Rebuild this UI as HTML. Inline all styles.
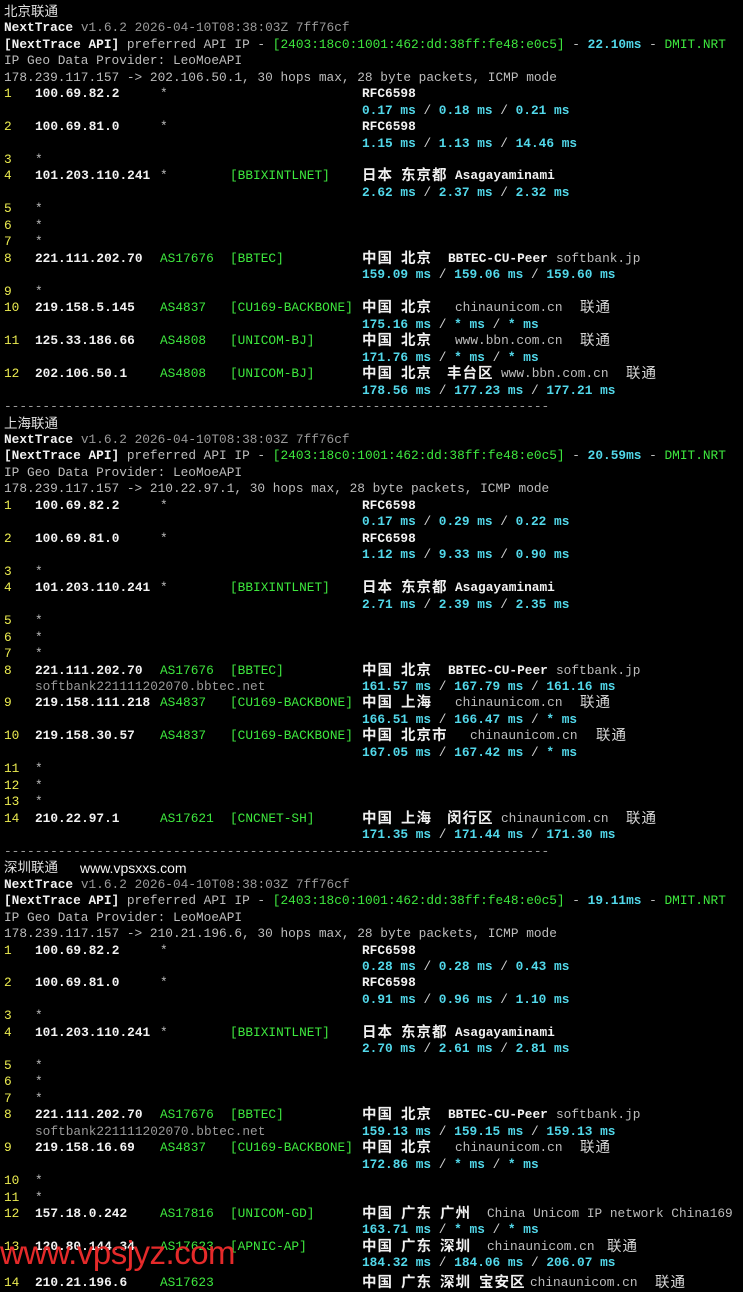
<!DOCTYPE html>
<html><head><meta charset="utf-8"><style>
html,body{margin:0;padding:0;background:#000;}
body{width:743px;height:1280px;overflow:hidden;position:relative;font-family:"Liberation Mono","Noto Sans CJK SC",monospace;font-size:12.8px;color:#bdbdbd;}
#t{position:absolute;top:3.8px;left:0;width:743px;}
.l{position:relative;height:16.48px;line-height:16.48px;white-space:pre;}
.l i{position:absolute;top:0;font-style:normal;white-space:pre;}
.w{color:#f2f2f2;font-weight:bold;}
.g{color:#9a9a9a;}
.gr{color:#3ee83e;}
.c{color:#52d8ea;font-weight:bold;}
.c b{color:#cfcfcf;font-weight:normal;}
.y{color:#ecec50;}
.l i.cj{font-family:"Noto Sans CJK SC",sans-serif;color:#f0f0f0;font-weight:bold;font-size:14.5px;letter-spacing:1px;top:-1px;}
.l i.cn{font-family:"Noto Sans CJK SC",sans-serif;color:#d8d8d8;font-size:14.5px;letter-spacing:1px;top:-1px;}
.l i.h{font-family:"Liberation Sans","Noto Sans CJK SC",sans-serif;color:#e0e0e0;font-size:13.5px;}
.wm{position:absolute;left:0;top:1234px;font-family:"Liberation Sans",sans-serif;font-size:33px;color:#e52a2a;letter-spacing:-0.5px;}
</style></head><body><div id="t">
<div class="l"><i class="h" style="left:4px">北京联通</i></div>
<div class="l"><i style="left:4px"><span class="w">NextTrace</span> <span class="g">v1.6.2 2026-04-10T08:38:03Z 7ff76cf</span></i></div>
<div class="l"><i style="left:4px"><span class="w">[NextTrace API]</span> preferred API IP - <span class="gr">[2403:18c0:1001:462:dd:38ff:fe48:e0c5]</span> - <span class="c">22.10ms</span> - <span class="gr">DMIT.NRT</span></i></div>
<div class="l"><i style="left:4px">IP Geo Data Provider: LeoMoeAPI</i></div>
<div class="l"><i style="left:4px">178.239.117.157 -&gt; 202.106.50.1, 30 hops max, 28 byte packets, ICMP mode</i></div>
<div class="l"><i class="y" style="left:4px">1</i><i class="w" style="left:35px">100.69.82.2</i><i style="left:160px">*</i><i class="w" style="left:362px">RFC6598</i></div>
<div class="l"><i class="c" style="left:362px">0.17 ms <b>/</b> 0.18 ms <b>/</b> 0.21 ms</i></div>
<div class="l"><i class="y" style="left:4px">2</i><i class="w" style="left:35px">100.69.81.0</i><i style="left:160px">*</i><i class="w" style="left:362px">RFC6598</i></div>
<div class="l"><i class="c" style="left:362px">1.15 ms <b>/</b> 1.13 ms <b>/</b> 14.46 ms</i></div>
<div class="l"><i class="y" style="left:4px">3</i><i style="left:35px">*</i></div>
<div class="l"><i class="y" style="left:4px">4</i><i class="w" style="left:35px">101.203.110.241</i><i style="left:160px">*</i><i class="gr" style="left:230px">[BBIXINTLNET]</i><i class="cj" style="left:362px">日本</i><i class="cj" style="left:401px">东京都</i><i class="w" style="left:455px">Asagayaminami</i></div>
<div class="l"><i class="c" style="left:362px">2.62 ms <b>/</b> 2.37 ms <b>/</b> 2.32 ms</i></div>
<div class="l"><i class="y" style="left:4px">5</i><i style="left:35px">*</i></div>
<div class="l"><i class="y" style="left:4px">6</i><i style="left:35px">*</i></div>
<div class="l"><i class="y" style="left:4px">7</i><i style="left:35px">*</i></div>
<div class="l"><i class="y" style="left:4px">8</i><i class="w" style="left:35px">221.111.202.70</i><i class="gr" style="left:160px">AS17676</i><i class="gr" style="left:230px">[BBTEC]</i><i class="cj" style="left:362px">中国</i><i class="cj" style="left:401px">北京</i><i class="w" style="left:448px">BBTEC-CU-Peer</i><i style="left:556px">softbank.jp</i></div>
<div class="l"><i class="c" style="left:362px">159.09 ms <b>/</b> 159.06 ms <b>/</b> 159.60 ms</i></div>
<div class="l"><i class="y" style="left:4px">9</i><i style="left:35px">*</i></div>
<div class="l"><i class="y" style="left:4px">10</i><i class="w" style="left:35px">219.158.5.145</i><i class="gr" style="left:160px">AS4837</i><i class="gr" style="left:230px">[CU169-BACKBONE]</i><i class="cj" style="left:362px">中国</i><i class="cj" style="left:401px">北京</i><i style="left:455px">chinaunicom.cn</i><i class="cn" style="left:580px">联通</i></div>
<div class="l"><i class="c" style="left:362px">175.16 ms <b>/</b> * ms <b>/</b> * ms</i></div>
<div class="l"><i class="y" style="left:4px">11</i><i class="w" style="left:35px">125.33.186.66</i><i class="gr" style="left:160px">AS4808</i><i class="gr" style="left:230px">[UNICOM-BJ]</i><i class="cj" style="left:362px">中国</i><i class="cj" style="left:401px">北京</i><i style="left:455px">www.bbn.com.cn</i><i class="cn" style="left:580px">联通</i></div>
<div class="l"><i class="c" style="left:362px">171.76 ms <b>/</b> * ms <b>/</b> * ms</i></div>
<div class="l"><i class="y" style="left:4px">12</i><i class="w" style="left:35px">202.106.50.1</i><i class="gr" style="left:160px">AS4808</i><i class="gr" style="left:230px">[UNICOM-BJ]</i><i class="cj" style="left:362px">中国</i><i class="cj" style="left:401px">北京</i><i class="cj" style="left:447px">丰台区</i><i style="left:501px">www.bbn.com.cn</i><i class="cn" style="left:626px">联通</i></div>
<div class="l"><i class="c" style="left:362px">178.56 ms <b>/</b> 177.23 ms <b>/</b> 177.21 ms</i></div>
<div class="l"><i class="g" style="left:4px">-----------------------------------------------------------------------</i></div>
<div class="l"><i class="h" style="left:4px">上海联通</i></div>
<div class="l"><i style="left:4px"><span class="w">NextTrace</span> <span class="g">v1.6.2 2026-04-10T08:38:03Z 7ff76cf</span></i></div>
<div class="l"><i style="left:4px"><span class="w">[NextTrace API]</span> preferred API IP - <span class="gr">[2403:18c0:1001:462:dd:38ff:fe48:e0c5]</span> - <span class="c">20.59ms</span> - <span class="gr">DMIT.NRT</span></i></div>
<div class="l"><i style="left:4px">IP Geo Data Provider: LeoMoeAPI</i></div>
<div class="l"><i style="left:4px">178.239.117.157 -&gt; 210.22.97.1, 30 hops max, 28 byte packets, ICMP mode</i></div>
<div class="l"><i class="y" style="left:4px">1</i><i class="w" style="left:35px">100.69.82.2</i><i style="left:160px">*</i><i class="w" style="left:362px">RFC6598</i></div>
<div class="l"><i class="c" style="left:362px">0.17 ms <b>/</b> 0.29 ms <b>/</b> 0.22 ms</i></div>
<div class="l"><i class="y" style="left:4px">2</i><i class="w" style="left:35px">100.69.81.0</i><i style="left:160px">*</i><i class="w" style="left:362px">RFC6598</i></div>
<div class="l"><i class="c" style="left:362px">1.12 ms <b>/</b> 9.33 ms <b>/</b> 0.90 ms</i></div>
<div class="l"><i class="y" style="left:4px">3</i><i style="left:35px">*</i></div>
<div class="l"><i class="y" style="left:4px">4</i><i class="w" style="left:35px">101.203.110.241</i><i style="left:160px">*</i><i class="gr" style="left:230px">[BBIXINTLNET]</i><i class="cj" style="left:362px">日本</i><i class="cj" style="left:401px">东京都</i><i class="w" style="left:455px">Asagayaminami</i></div>
<div class="l"><i class="c" style="left:362px">2.71 ms <b>/</b> 2.39 ms <b>/</b> 2.35 ms</i></div>
<div class="l"><i class="y" style="left:4px">5</i><i style="left:35px">*</i></div>
<div class="l"><i class="y" style="left:4px">6</i><i style="left:35px">*</i></div>
<div class="l"><i class="y" style="left:4px">7</i><i style="left:35px">*</i></div>
<div class="l"><i class="y" style="left:4px">8</i><i class="w" style="left:35px">221.111.202.70</i><i class="gr" style="left:160px">AS17676</i><i class="gr" style="left:230px">[BBTEC]</i><i class="cj" style="left:362px">中国</i><i class="cj" style="left:401px">北京</i><i class="w" style="left:448px">BBTEC-CU-Peer</i><i style="left:556px">softbank.jp</i></div>
<div class="l"><i class="g" style="left:35px">softbank221111202070.bbtec.net</i><i class="c" style="left:362px">161.57 ms <b>/</b> 167.79 ms <b>/</b> 161.16 ms</i></div>
<div class="l"><i class="y" style="left:4px">9</i><i class="w" style="left:35px">219.158.111.218</i><i class="gr" style="left:160px">AS4837</i><i class="gr" style="left:230px">[CU169-BACKBONE]</i><i class="cj" style="left:362px">中国</i><i class="cj" style="left:401px">上海</i><i style="left:455px">chinaunicom.cn</i><i class="cn" style="left:580px">联通</i></div>
<div class="l"><i class="c" style="left:362px">166.51 ms <b>/</b> 166.47 ms <b>/</b> * ms</i></div>
<div class="l"><i class="y" style="left:4px">10</i><i class="w" style="left:35px">219.158.30.57</i><i class="gr" style="left:160px">AS4837</i><i class="gr" style="left:230px">[CU169-BACKBONE]</i><i class="cj" style="left:362px">中国</i><i class="cj" style="left:401px">北京市</i><i style="left:470px">chinaunicom.cn</i><i class="cn" style="left:596px">联通</i></div>
<div class="l"><i class="c" style="left:362px">167.05 ms <b>/</b> 167.42 ms <b>/</b> * ms</i></div>
<div class="l"><i class="y" style="left:4px">11</i><i style="left:35px">*</i></div>
<div class="l"><i class="y" style="left:4px">12</i><i style="left:35px">*</i></div>
<div class="l"><i class="y" style="left:4px">13</i><i style="left:35px">*</i></div>
<div class="l"><i class="y" style="left:4px">14</i><i class="w" style="left:35px">210.22.97.1</i><i class="gr" style="left:160px">AS17621</i><i class="gr" style="left:230px">[CNCNET-SH]</i><i class="cj" style="left:362px">中国</i><i class="cj" style="left:401px">上海</i><i class="cj" style="left:447px">闵行区</i><i style="left:501px">chinaunicom.cn</i><i class="cn" style="left:626px">联通</i></div>
<div class="l"><i class="c" style="left:362px">171.35 ms <b>/</b> 171.44 ms <b>/</b> 171.30 ms</i></div>
<div class="l"><i class="g" style="left:4px">-----------------------------------------------------------------------</i></div>
<div class="l"><i class="h" style="left:4px">深圳联通</i><i class="h" style="left:80px;color:#f4f4f4;font-size:14px">www.vpsxxs.com</i></div>
<div class="l"><i style="left:4px"><span class="w">NextTrace</span> <span class="g">v1.6.2 2026-04-10T08:38:03Z 7ff76cf</span></i></div>
<div class="l"><i style="left:4px"><span class="w">[NextTrace API]</span> preferred API IP - <span class="gr">[2403:18c0:1001:462:dd:38ff:fe48:e0c5]</span> - <span class="c">19.11ms</span> - <span class="gr">DMIT.NRT</span></i></div>
<div class="l"><i style="left:4px">IP Geo Data Provider: LeoMoeAPI</i></div>
<div class="l"><i style="left:4px">178.239.117.157 -&gt; 210.21.196.6, 30 hops max, 28 byte packets, ICMP mode</i></div>
<div class="l"><i class="y" style="left:4px">1</i><i class="w" style="left:35px">100.69.82.2</i><i style="left:160px">*</i><i class="w" style="left:362px">RFC6598</i></div>
<div class="l"><i class="c" style="left:362px">0.28 ms <b>/</b> 0.28 ms <b>/</b> 0.43 ms</i></div>
<div class="l"><i class="y" style="left:4px">2</i><i class="w" style="left:35px">100.69.81.0</i><i style="left:160px">*</i><i class="w" style="left:362px">RFC6598</i></div>
<div class="l"><i class="c" style="left:362px">0.91 ms <b>/</b> 0.96 ms <b>/</b> 1.10 ms</i></div>
<div class="l"><i class="y" style="left:4px">3</i><i style="left:35px">*</i></div>
<div class="l"><i class="y" style="left:4px">4</i><i class="w" style="left:35px">101.203.110.241</i><i style="left:160px">*</i><i class="gr" style="left:230px">[BBIXINTLNET]</i><i class="cj" style="left:362px">日本</i><i class="cj" style="left:401px">东京都</i><i class="w" style="left:455px">Asagayaminami</i></div>
<div class="l"><i class="c" style="left:362px">2.70 ms <b>/</b> 2.61 ms <b>/</b> 2.81 ms</i></div>
<div class="l"><i class="y" style="left:4px">5</i><i style="left:35px">*</i></div>
<div class="l"><i class="y" style="left:4px">6</i><i style="left:35px">*</i></div>
<div class="l"><i class="y" style="left:4px">7</i><i style="left:35px">*</i></div>
<div class="l"><i class="y" style="left:4px">8</i><i class="w" style="left:35px">221.111.202.70</i><i class="gr" style="left:160px">AS17676</i><i class="gr" style="left:230px">[BBTEC]</i><i class="cj" style="left:362px">中国</i><i class="cj" style="left:401px">北京</i><i class="w" style="left:448px">BBTEC-CU-Peer</i><i style="left:556px">softbank.jp</i></div>
<div class="l"><i class="g" style="left:35px">softbank221111202070.bbtec.net</i><i class="c" style="left:362px">159.13 ms <b>/</b> 159.15 ms <b>/</b> 159.13 ms</i></div>
<div class="l"><i class="y" style="left:4px">9</i><i class="w" style="left:35px">219.158.16.69</i><i class="gr" style="left:160px">AS4837</i><i class="gr" style="left:230px">[CU169-BACKBONE]</i><i class="cj" style="left:362px">中国</i><i class="cj" style="left:401px">北京</i><i style="left:455px">chinaunicom.cn</i><i class="cn" style="left:580px">联通</i></div>
<div class="l"><i class="c" style="left:362px">172.86 ms <b>/</b> * ms <b>/</b> * ms</i></div>
<div class="l"><i class="y" style="left:4px">10</i><i style="left:35px">*</i></div>
<div class="l"><i class="y" style="left:4px">11</i><i style="left:35px">*</i></div>
<div class="l"><i class="y" style="left:4px">12</i><i class="w" style="left:35px">157.18.0.242</i><i class="gr" style="left:160px">AS17816</i><i class="gr" style="left:230px">[UNICOM-GD]</i><i class="cj" style="left:362px">中国</i><i class="cj" style="left:401px">广东</i><i class="cj" style="left:440px">广州</i><i style="left:487px">China Unicom IP network China169</i></div>
<div class="l"><i class="c" style="left:362px">163.71 ms <b>/</b> * ms <b>/</b> * ms</i></div>
<div class="l"><i class="y" style="left:4px">13</i><i class="w" style="left:35px">120.80.144.34</i><i class="gr" style="left:160px">AS17623</i><i class="gr" style="left:230px">[APNIC-AP]</i><i class="cj" style="left:362px">中国</i><i class="cj" style="left:401px">广东</i><i class="cj" style="left:440px">深圳</i><i style="left:487px">chinaunicom.cn</i><i class="cn" style="left:607px">联通</i></div>
<div class="l"><i class="c" style="left:362px">184.32 ms <b>/</b> 184.06 ms <b>/</b> 206.07 ms</i></div>
<div class="l" style="top:3px"><i class="y" style="left:4px">14</i><i class="w" style="left:35px">210.21.196.6</i><i class="gr" style="left:160px">AS17623</i><i class="cj" style="left:362px">中国</i><i class="cj" style="left:401px">广东</i><i class="cj" style="left:440px">深圳</i><i class="cj" style="left:479px">宝安区</i><i style="left:530px">chinaunicom.cn</i><i class="cn" style="left:655px">联通</i></div>
</div>
<div class="wm">www.vpsjyz.com</div>
</body></html>
